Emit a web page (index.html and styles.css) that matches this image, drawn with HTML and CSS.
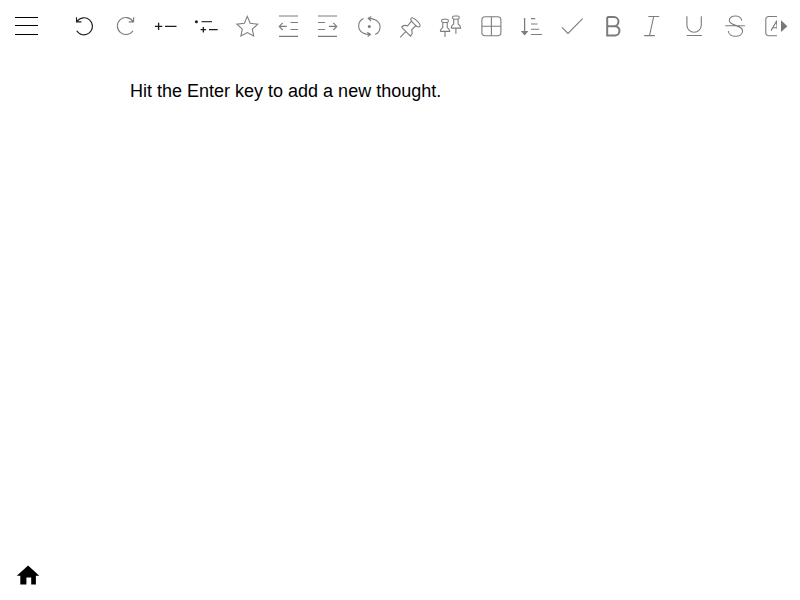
FILE: index.html
```html
<!DOCTYPE html>
<html lang="en">
<head>
<meta charset="utf-8">
<title>Thoughts</title>
<link rel="stylesheet" href="styles.css">
</head>
<body>
<div class="app">
  <header class="header">
    <svg class="menu" viewBox="0 0 64 52"><path d="M15 17.5h23M15 25.5h23M15 34.5h23"/></svg>
    <nav class="toolbar">
      <svg class="tool active" viewBox="0 0 41 52"><path d="M12.700 30.800A8.500 8.500 0 1 0 13 21.400M12.500 17.200v4.700h4.900"/></svg>
      <svg class="tool narrow" viewBox="0 0 41 52"><path d="M28 30.700A8.500 8.500 0 1 1 28 21.400M28.600 17.200v4.700h-4.900"/></svg>
      <svg class="tool active" viewBox="0 0 41 52"><path class="medium" d="M9.900 26.400h7.400M13.600 22.700v7.400M20 26.400h11.500"/></svg>
      <svg class="tool active" viewBox="0 0 41 52"><circle class="solid" cx="10.400" cy="21.800" r="1.500"/><path d="M15.500 21.700h10.500"/><path class="medium" d="M14.600 29.700h5.400M17.300 27v5.400M23 29.700h8.700"/></svg>
      <svg class="tool" viewBox="0 0 41 52"><path d="M20.300 16.400L23.200 23.200L30.700 24.200L25.300 29.200L26.700 36L20.300 32.600L13.900 36L15.300 29.200L9.900 24.200L17.400 23.200Z"/></svg>
      <svg class="tool narrow" viewBox="0 0 41 52"><path d="M11 16h19M11 36.400h19M22.500 22.500H30M22.500 29.500H30M11.200 26.400h7.600M14.700 22.800L11.200 26.400L14.700 30"/></svg>
      <svg class="tool" viewBox="0 0 41 52"><path d="M10 16h19M10 36.400h19M10 22.500h7M10 29.500h7M21 26.400h7.800M25.300 22.800L28.800 26.400L25.300 30"/></svg>
      <svg class="tool" viewBox="0 0 41 52"><circle class="solid" cx="20.300" cy="26.400" r="1.500"/><path d="M14.500 18.500C8.200 21.500 8.200 29.500 13.600 32.700Q17 34.600 21.500 34.500M18.300 32.200L21.500 34.500L18.600 36.500M26.200 34.500C32.500 31.500 32.500 23.500 27.100 20.300Q23.500 18.200 19.200 18.400M22.300 16.500L19.200 18.400L22 21"/></svg>
      <svg class="tool narrow" viewBox="0 0 41 52"><path d="M10.200 37.300L15.700 31.700M11.500 27.200C13 25.200 15.600 25.100 17.600 25.900L21.900 20.700M26 25.500L21.600 29.800C22.500 32 22.400 34.300 20.500 36.200L11.500 27.200M21.200 18.100C23.300 16.600 30.900 23.500 30 26C28.900 28 27 26.700 24.500 24.400C22 22 19.700 19.500 21.200 18.100Z"/></svg>
      <svg class="tool" viewBox="0 0 41 52"><g id="pin"><path d="M15 31.400V37M10.300 31.400H19.700Q19.700 28.800 17.200 27.400V22.500M12.800 22.500V27.400Q10.300 28.800 10.300 31.400"/><rect x="11.600" y="19.300" width="6.800" height="3.200" rx="1.600"/></g><use href="#pin" x="10.900" y="-3.300"/></svg>
      <svg class="tool" viewBox="0 0 41 52"><rect x="10.900" y="16.700" width="19" height="19" rx="3.200"/><path d="M20.400 16.700v19M10.900 26.200h19"/></svg>
      <svg class="tool narrow" viewBox="0 0 41 52"><path class="medium" d="M12.600 18v14"/><path d="M19 18.600h4.200M19 24h6.500M19 29.200h8.200M19 34.500h11"/><path class="solid" d="M8.800 31h7.600l-3.800 4.400z"/></svg>
      <svg class="tool" viewBox="0 0 41 52"><path d="M9.900 27.300L16 33.400L30.600 18.700"/></svg>
      <svg class="tool" viewBox="0 0 41 52"><path class="bold" d="M14.200 17h6.700a4.600 4.600 0 0 1 0 9.200H14.200M20.900 26.200h1a4.600 4.600 0 0 1 0 9.200H14.200V17"/></svg>
      <svg class="tool narrow" viewBox="0 0 41 52"><path d="M14.300 16.500H25.200M10.200 35.600h10.600M19.700 16.500L15.500 35.600"/></svg>
      <svg class="tool" viewBox="0 0 41 52"><path d="M12.900 16.300v8.800a7.200 7.200 0 0 0 14.400 0v-8.800M12.700 35.500h15.200"/></svg>
      <svg class="tool" viewBox="0 0 41 52"><path d="M10.300 25.700H30M26.700 20.800C26.500 14.500 14.300 14.200 14.300 20.600C14.300 26.200 27.600 24.600 27.600 31C27.600 38 13.500 38 13.300 31"/></svg>
      <svg class="tool" viewBox="0 0 41 52"><rect x="9.800" y="16.500" width="19" height="19.200" rx="3.200"/><path d="M15 30.600L20.400 21.500L21.600 30.600M16.700 27.700h5"/></svg>
    </nav>
    <svg class="more" viewBox="0 0 23 52"><path d="M4 20.300L10.400 26.200L4 32z"/></svg>
  </header>
  <main class="content">Hit the Enter key to add a new thought.</main>
  <footer class="footer">
    <svg class="home" viewBox="0 0 24 20"><path d="M12.100 .5L23.300 10.800H19.900V19.500H15.200V12.500H10.400V19.500H4.300V10.800H.8z"/></svg>
  </footer>
</div>
</body>
</html>
```
FILE: styles.css
```css
body {
  margin: 0;
  background: #fff;
  color: #000;
  font-family: "Liberation Sans", Arial, sans-serif;
  font-size: 18px;
}

.app {
  display: flex;
  flex-direction: column;
  height: 100vh;
  overflow: hidden;
}

.header {
  display: flex;
  height: 52px;
}

svg {
  display: block;
  flex: none;
}

.menu {
  width: 64px;
  height: 52px;
  stroke: #000;
}

.toolbar {
  display: flex;
  width: 713px;
  overflow: hidden;
}

.tool {
  width: 41px;
  height: 52px;
  overflow: visible;
  color: #7c7c7c;
  fill: none;
  stroke: currentColor;
  stroke-width: 1.1;
}

.tool.narrow {
  margin-right: -1px;
}

.tool.active {
  color: #1c1c1c;
}

.medium {
  stroke-width: 1.3;
}

.bold {
  stroke-width: 2;
}

.solid {
  fill: currentColor;
  stroke: none;
}

.more {
  width: 23px;
  height: 52px;
  fill: #777;
}

.content {
  flex: 1;
  padding: 28px 130px 0;
  line-height: 22px;
}

.footer {
  padding: 0 16px 15px;
}

.home {
  width: 24px;
  height: 20px;
}
```
